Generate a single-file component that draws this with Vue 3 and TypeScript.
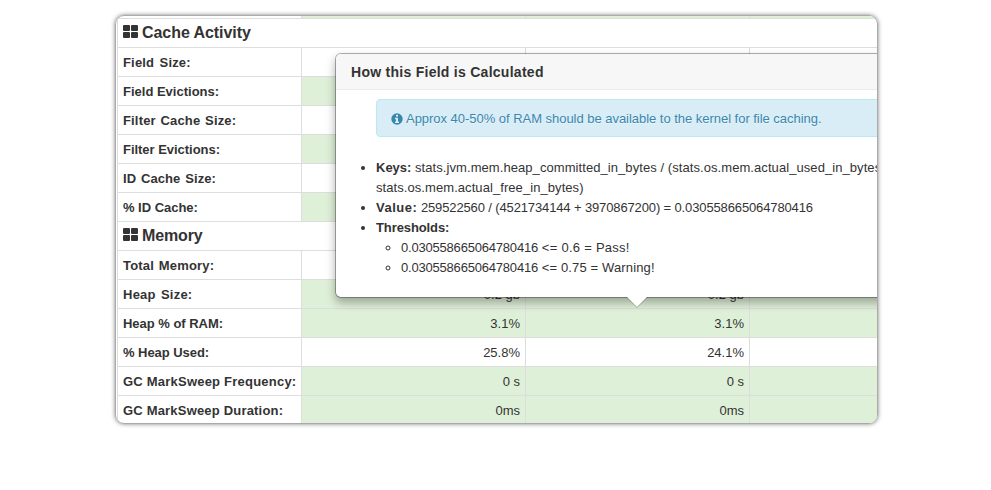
<script setup lang="ts">
interface Cell { text: string; ok: boolean }
interface Row { label: string; ls: number; ws: number; heading?: boolean; cells: Cell[] }

const row = (label: string, ls: number, ws: number, ok: boolean, a = '', b = ''): Row => ({
  label,
  ls,
  ws,
  cells: [a, b, ''].map((text) => ({ text, ok })),
})
const heading = (label: string, ls: number): Row => ({ label, ls, ws: 0, heading: true, cells: [] })

const rows: Row[] = [
  heading('Cache Activity', -0.06),
  row('Field Size:', 0.18, 1.5, false),
  row('Field Evictions:', 0, 0, true),
  row('Filter Cache Size:', 0.16, 1, false),
  row('Filter Evictions:', -0.03, 0, true),
  row('ID Cache Size:', 0.1, 1, false),
  row('% ID Cache:', -0.03, 0, true),
  heading('Memory', -0.12),
  row('Total Memory:', 0.18, 1, false),
  row('Heap Size:', 0.24, 1.3, true, '0.2 gb', '0.2 gb'),
  row('Heap % of RAM:', -0.02, 0, true, '3.1%', '3.1%'),
  row('% Heap Used:', -0.05, 0, false, '25.8%', '24.1%'),
  row('GC MarkSweep Frequency:', 0.22, 0, true, '0 s', '0 s'),
  row('GC MarkSweep Duration:', 0.19, 0, true, '0ms', '0ms'),
]
const spacing = (r: Row) => ({ letterSpacing: r.ls + 'px', wordSpacing: r.ws + 'px' })
</script>

<template>
  <main class="page">
    <section class="panel">
      <div class="grid">
        <div class="row sliver"><div class="label"></div><div v-for="n in 3" :key="n" class="cell ok"></div></div>
        <div v-for="r in rows" :key="r.label" class="row" :class="{ heading: r.heading }">
          <h4 v-if="r.heading" class="title">
            <svg width="15" height="13" viewBox="0 0 15 13"><path d="M.7 0h5.6l.7.7v4.6l-.7.7H.7L0 5.3V.7zM8.700 0h5.600l.7.7v4.600l-.7.7H8.700L8 5.300V.7zM.7 7h5.600l.7.7v4.600l-.7.7H.7l-.7-.7V7.700zM8.700 7h5.600l.7.7v4.600l-.7.7H8.700l-.7-.7V7.700z" fill="#333" /></svg>
            <span :style="spacing(r)">{{ r.label }}</span>
          </h4>
          <template v-else>
            <div class="label"><span :style="spacing(r)">{{ r.label }}</span></div>
            <div v-for="(c, i) in r.cells" :key="i" class="cell" :class="{ ok: c.ok }">{{ c.text }}</div>
          </template>
        </div>
      </div>
      <aside class="popover">
        <h3 class="pop-title">How this Field is Calculated</h3>
        <div class="pop-body">
          <div class="alert">
            <svg width="12" height="12" viewBox="0 0 12 12"><circle cx="6" cy="6" r="5.7" fill="#3a87ad" /><path d="M5 1.800h2v1.700H5zM4 4.800h3v3.700h1V10H4V8.500h1V6.200H4z" fill="#d9edf7" /></svg>
            <span>Approx 40-50% of RAM should be available to the kernel for file caching.</span>
          </div>
          <ul>
            <li><b>Keys:</b>&nbsp;<span class="keys">stats.jvm.mem.heap_committed_in_bytes / (stats.os.mem.actual_used_in_bytes +<br>stats.os.mem.actual_free_in_bytes)</span></li>
            <li><b class="value">Value:</b>&nbsp;<span class="sum">259522560 / (4521734144 + 3970867200) = 0.030558665064780416</span></li>
            <li><b class="thresholds">Thresholds:</b>
              <ul>
                <li><span class="num">0.030558665064780416</span><span class="pass"> &lt;= 0.6 = Pass!</span></li>
                <li><span class="num">0.030558665064780416</span><span class="warn"> &lt;= 0.75 = Warning!</span></li>
              </ul>
            </li>
          </ul>
        </div>
        <svg class="arrow" width="22" height="11" viewBox="0 0 22 11"><path d="M0 0h22L11 11z" fill="#000" fill-opacity=".25" /><path d="M1 0h20L11 10z" fill="#fff" /></svg>
      </aside>
    </section>
  </main>
</template>

<style>
body { margin: 0; background: #fff; }
</style>
<style scoped>
* { box-sizing: border-box; }
.page { width: 991px; height: 490px; padding: 15px 0 0 115px; font: 13px/20px "Liberation Sans", Arial, sans-serif; color: #333; overflow: hidden; }
.panel { position: relative; width: 763px; height: 409px; border: 1px solid #aaa; border-radius: 9px; overflow: hidden; box-shadow: 0 0 4px rgba(0,0,0,.5); }
.grid { margin-left: 1px; width: 857px; border-left: 1px solid #ddd; }
.row { display: grid; grid-template-columns: 183px 224px 224px 224px; height: 29px; border-bottom: 1px solid #ddd; }
.row.sliver { height: 3px; }
.row.sliver > div { padding: 0; }
.row.heading { display: block; }
.title { margin: 0; padding: 4px 5px; font-size: 16px; line-height: 20px; display: flex; align-items: flex-start; gap: 4px; }
.title svg { margin-top: 2px; }
.label { padding: 5px 5px 3px; font-weight: bold; white-space: nowrap; }
.cell { border-left: 1px solid #ddd; padding: 5px 5px 3px; text-align: right; }
.cell.ok { background: #dff0d8; }
.popover { position: absolute; left: 219px; top: 37px; width: 604px; height: 245px; background: #fff; border: 1px solid rgba(0,0,0,.3); background-clip: padding-box; border-radius: 6px; box-shadow: 0 5px 10px rgba(0,0,0,.3); }
.pop-title { margin: 0; height: 36px; padding: 8px 15px; font-size: 14px; line-height: 20px; letter-spacing: .27px; background: #f7f7f7; border-bottom: 1px solid #ebebeb; border-radius: 5px 5px 0 0; }
.pop-body { padding: 9px 15px; }
.alert { margin: 0 0 21px 25px; height: 38px; padding: 9px 14px 7px; border: 1px solid #bce8f1; border-radius: 4px; background: #d9edf7; color: #3a87ad; display: flex; align-items: center; gap: 3px; letter-spacing: -.03px; text-shadow: 0 1px 0 rgba(255,255,255,.5); }
ul { margin: 0 0 10px 25px; padding: 0; white-space: nowrap; }
ul ul { margin-bottom: 0; }
.keys { letter-spacing: .07px; }
.value { letter-spacing: .5px; }
.sum { letter-spacing: -.13px; }
.thresholds { letter-spacing: -.1px; }
.num { letter-spacing: -.2px; }
.pass { letter-spacing: .26px; }
.warn { letter-spacing: .14px; }
.arrow { position: absolute; left: 290px; top: 243px; }
</style>
